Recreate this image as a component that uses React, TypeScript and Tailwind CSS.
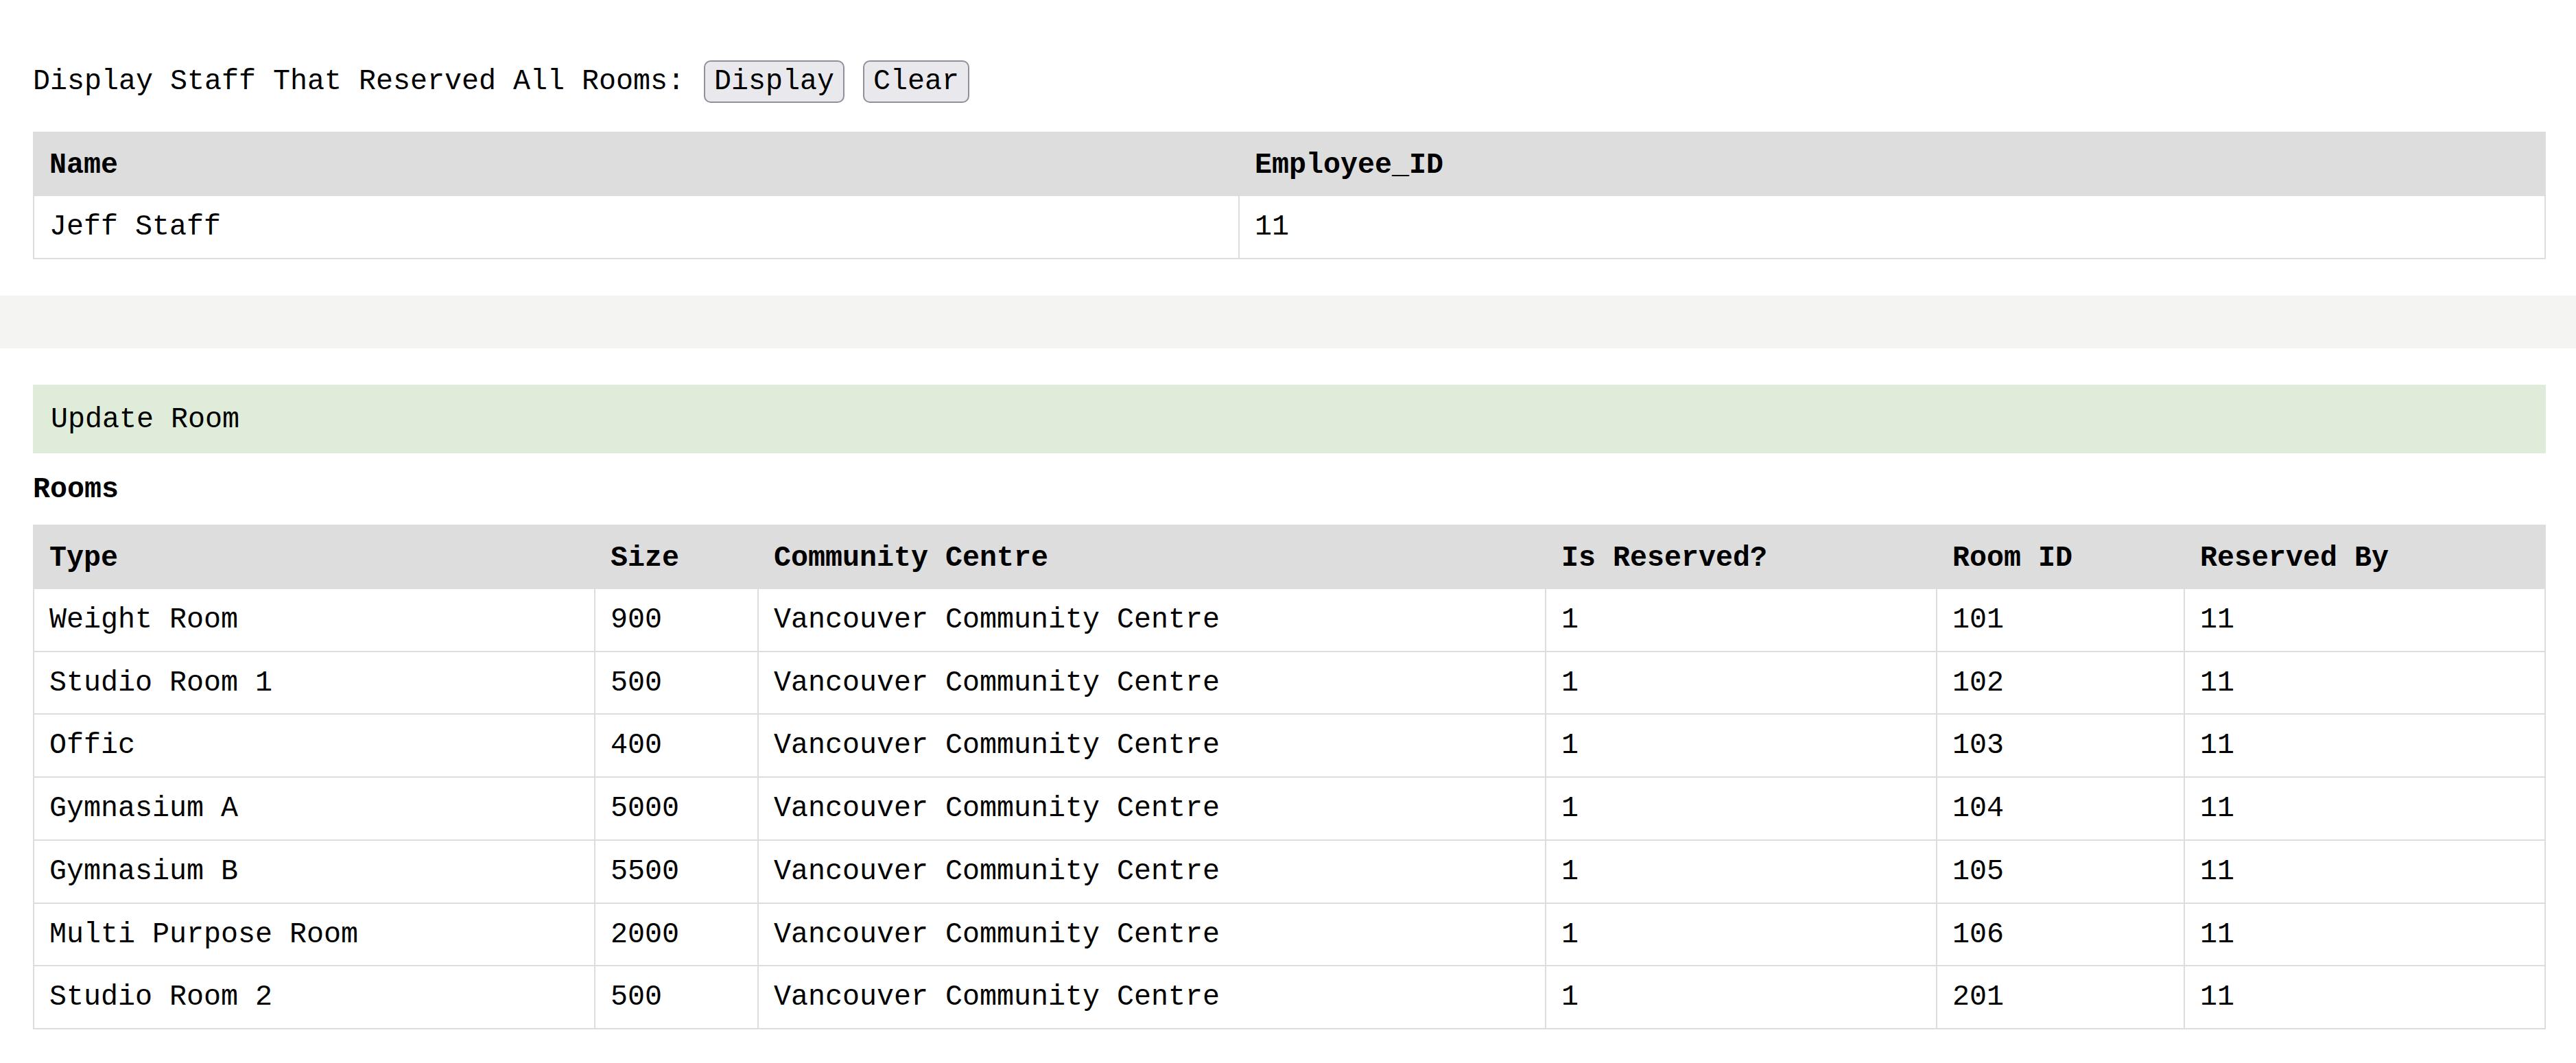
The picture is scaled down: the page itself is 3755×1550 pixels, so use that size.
import React from 'react'

type Room = {
  type: string
  size: string
  centre: string
  reserved: string
  id: string
  by: string
}

const ROOMS: Room[] = [
  { type: 'Weight Room', size: '900', centre: 'Vancouver Community Centre', reserved: '1', id: '101', by: '11' },
  { type: 'Studio Room 1', size: '500', centre: 'Vancouver Community Centre', reserved: '1', id: '102', by: '11' },
  { type: 'Offic', size: '400', centre: 'Vancouver Community Centre', reserved: '1', id: '103', by: '11' },
  { type: 'Gymnasium A', size: '5000', centre: 'Vancouver Community Centre', reserved: '1', id: '104', by: '11' },
  { type: 'Gymnasium B', size: '5500', centre: 'Vancouver Community Centre', reserved: '1', id: '105', by: '11' },
  { type: 'Multi Purpose Room', size: '2000', centre: 'Vancouver Community Centre', reserved: '1', id: '106', by: '11' },
  { type: 'Studio Room 2', size: '500', centre: 'Vancouver Community Centre', reserved: '1', id: '201', by: '11' },
]

const TH = 'bg-[#dddddd] border-2 border-[#dddddd] px-[22px] pt-[22px] pb-[18px] text-left font-bold leading-[50px]'
const TD = 'border-2 border-[#dddddd] px-[22px] pt-[21px] pb-[19px] leading-[49.75px] font-normal'

function Button({ children }: { children: React.ReactNode }) {
  return (
    <button className="h-[62px] px-[13px] rounded-[10px] border-2 border-[#8f8f9d] bg-[#e9e9ed] leading-[47px] text-black">
      {children}
    </button>
  )
}

export default function App() {
  return (
    <div className="min-h-screen w-full bg-white text-black text-[41.67px] font-['Liberation_Mono',monospace]">
      {/* Staff query */}
      <section className="pl-[48px] pr-[44px] pt-[88px]">
        <div className="flex items-center">
          <span className="leading-[47px]">Display Staff That Reserved All Rooms:</span>
          <div className="ml-[28px] flex gap-[27px]">
            <Button>Display</Button>
            <Button>Clear</Button>
          </div>
        </div>

        <table className="mt-[42px] w-full table-fixed border-collapse">
          <colgroup>
            <col className="w-[1757px]" />
            <col />
          </colgroup>
          <thead>
            <tr>
              <th className={TH}>Name</th>
              <th className={TH}>Employee_ID</th>
            </tr>
          </thead>
          <tbody>
            <tr>
              <td className={TD}>Jeff Staff</td>
              <td className={TD}>11</td>
            </tr>
          </tbody>
        </table>
      </section>

      {/* Divider band */}
      <div className="mt-[53px] h-[77px] bg-[#f4f4f2]" />

      {/* Rooms */}
      <section className="pl-[48px] pr-[44px] pt-[53px] pb-[48px]">
        <div className="flex h-[100px] items-center bg-[#e0ecda] pl-[26px] pt-[3px] leading-[47px]">Update Room</div>
        <h3 className="mt-[30px] font-bold leading-[47px]">Rooms</h3>

        <table className="mt-[27px] w-full table-fixed border-collapse">
          <colgroup>
            <col className="w-[818px]" />
            <col className="w-[238px]" />
            <col className="w-[1148px]" />
            <col className="w-[570px]" />
            <col className="w-[361px]" />
            <col />
          </colgroup>
          <thead>
            <tr>
              <th className={TH}>Type</th>
              <th className={TH}>Size</th>
              <th className={TH}>Community Centre</th>
              <th className={TH}>Is Reserved?</th>
              <th className={TH}>Room ID</th>
              <th className={TH}>Reserved By</th>
            </tr>
          </thead>
          <tbody>
            {ROOMS.map((r) => (
              <tr key={r.id}>
                <td className={TD}>{r.type}</td>
                <td className={TD}>{r.size}</td>
                <td className={TD}>{r.centre}</td>
                <td className={TD}>{r.reserved}</td>
                <td className={TD}>{r.id}</td>
                <td className={TD}>{r.by}</td>
              </tr>
            ))}
          </tbody>
        </table>
      </section>
    </div>
  )
}
